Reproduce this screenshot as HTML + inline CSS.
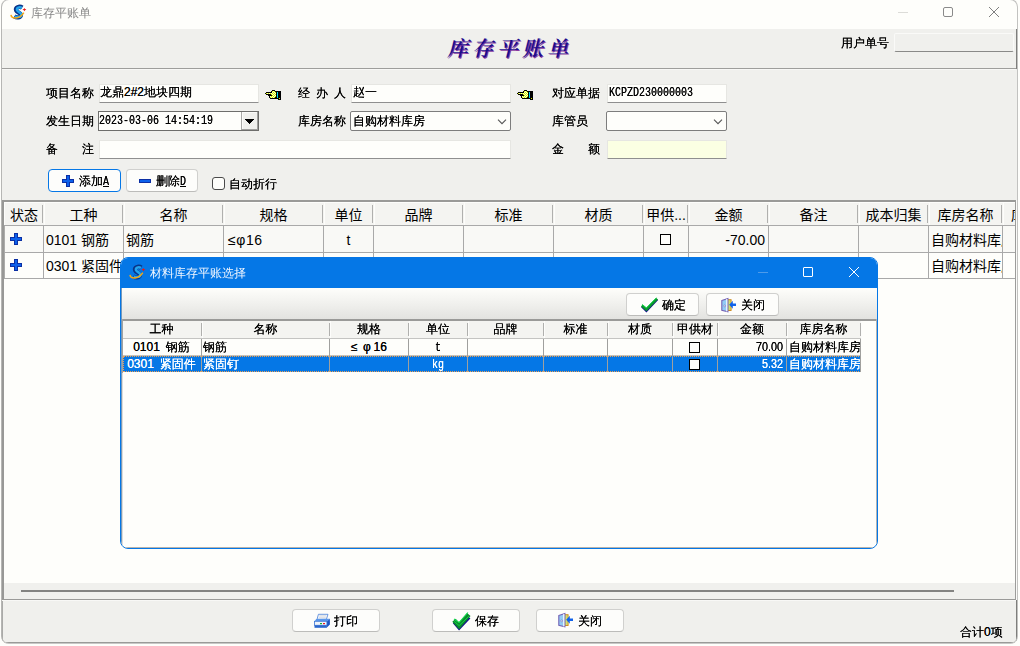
<!DOCTYPE html>
<html lang="zh-CN">
<head>
<meta charset="utf-8">
<title>库存平账单</title>
<style>
*{box-sizing:border-box;margin:0;padding:0}
html,body{width:1020px;height:646px;overflow:hidden;background:#fefefb}
body{position:relative;font-family:"Liberation Sans","WenQuanYi Zen Hei","Noto Sans CJK SC",sans-serif;font-size:12px;color:#000}
.a{position:absolute}
.clip{position:absolute;left:1px;top:-1px;width:1017px;height:645px;border-radius:8px;overflow:hidden}
.win{position:absolute;left:-1px;top:1px;width:1018px;height:644px;background:#f0f0ed}
.frame{position:absolute;left:1px;top:-1px;width:1017px;height:645px;border-radius:8px;border:1px solid #c2c2c0;border-left-color:#b6b6b4;border-bottom-color:#c8c8c6}
.tbar{position:absolute;left:0;top:0;width:1018px;height:29px;background:#fefefb}
.t{position:absolute;font-size:12px;line-height:14px;white-space:pre;color:#000;word-spacing:2.67px;text-shadow:0 0 0 currentColor}
.m{font-family:"Liberation Mono","WenQuanYi Zen Hei",monospace;font-size:12px;word-spacing:0;display:inline-block;transform:scaleX(.8333);transform-origin:0 50%}
.s{font-family:"Liberation Sans","WenQuanYi Zen Hei",sans-serif;font-size:12px;word-spacing:3.34px;display:inline-block;transform:scaleX(.9);transform-origin:0 50%}
.inp{position:absolute;height:19px;background:#fefefb;border:1px solid #e6e6e2;border-bottom:1px solid #8f8f8f;border-radius:1px}
.sel{position:absolute;height:20px;background:#fefefb;border:1px solid #7d7d7d;border-radius:2px}
.btn{position:absolute;height:23px;background:#fdfdfb;border:1px solid #d0d0ce;border-bottom-color:#bcbcba;border-radius:4px}
.g14{font-family:"Liberation Sans","Noto Sans CJK SC",sans-serif;font-size:14px;line-height:20px;position:absolute;white-space:pre;color:#000}
.vl{position:absolute;width:1px;background:#a9a9a9}
.hl{position:absolute;height:1px;background:#a9a9a9}
svg{position:absolute;overflow:visible}
</style>
</head>
<body>
<div class="clip">
<div class="win">
<div class="tbar">
<svg style="left:10px;top:4px" width="16" height="16" viewBox="0 0 16 16"><g transform="translate(8.600 8.400) scale(.88) translate(-8.500 -8)"><path d="M12.600 2.600C9.400 0.400 4.600 2.600 5.800 5.800C6.900 8.600 12 8.400 11 11.600C10.200 14 6.200 14.200 3.600 12.600" fill="none" stroke="#0a3488" stroke-width="5"/><path d="M12.200 2.800C9.400 1.200 5.800 2.800 6.800 5.600C7.900 8.200 12.600 8.400 11.600 11.400C10.700 13.600 6.800 13.800 4.200 12.400" fill="none" stroke="#22a4ee" stroke-width="2.900"/></g><path d="M1 10.800C1.600 15.200 9.600 15.400 13.800 8.600" fill="none" stroke="#f2a616" stroke-width="1.500"/><path d="M14.400 3.900l.65 1.150 1.350.55-1.350.55-.65 1.150-.65-1.150-1.350-.55 1.350-.55z" fill="#e81818"/></svg>
<div class="t" style="left:31px;top:6px;color:#868686;text-shadow:none">库存平账单</div>
<div class="a" style="left:898px;top:12px;width:10px;height:1px;background:#dcdcd8"></div>
<div class="a" style="left:943px;top:7px;width:10px;height:10px;border:1px solid #8a8a8a;border-radius:2px"></div>
<svg style="left:988px;top:6px" width="12" height="12" viewBox="0 0 12 12"><path d="M1 1L11 11M11 1L1 11" stroke="#808080" stroke-width="1" fill="none"/></svg>
</div>
<div class="a" style="left:1016px;top:29px;width:1px;height:40px;background:#7e7e7c"></div>
<div class="a" style="left:1016px;top:600px;width:1px;height:43px;background:#7e7e7c"></div>
<div class="a" style="left:2px;top:642px;width:1015px;height:1px;background:#9a9a98"></div>
<div class="a" id="bigtitle" style="left:447px;top:36px;font-family:'Liberation Serif','Noto Serif CJK SC',serif;font-weight:600;font-style:italic;font-size:21px;line-height:26px;letter-spacing:4px;color:#1c0c8c;text-shadow:1px 1px 0 #8a3aa0;white-space:pre">库存平账单</div>
<div class="t" style="left:841px;top:36px">用户单号</div>
<div class="a" style="left:894px;top:33px;width:120px;height:19px;background:#f0f0ed;border:1px solid #fafaf8;border-bottom:1px solid #8a8a88;border-radius:2px"></div>
<div class="hl" style="left:2px;top:68px;width:1014px;background:#9e9e9c"></div>
<div class="hl" style="left:2px;top:69px;width:1014px;background:#f8f8f6"></div>
<div class="t" style="left:46px;top:86px">项目名称</div>
<div class="inp" style="left:99px;top:84px;width:160px"></div>
<div class="t" style="left:100px;top:85px">龙鼎2#2地块四期</div>
<svg style="left:265px;top:90px" width="16" height="10" viewBox="0 0 16 10" shape-rendering="crispEdges"><rect x="7" y="0" width="3" height="1" fill="#000"/><rect x="6" y="1" width="1" height="1" fill="#000"/><rect x="7" y="1" width="1" height="1" fill="#d4f000"/><rect x="8" y="1" width="1" height="1" fill="#fbffd0"/><rect x="9" y="1" width="1" height="1" fill="#d4f000"/><rect x="10" y="1" width="6" height="1" fill="#000"/><rect x="1" y="2" width="6" height="1" fill="#000"/><rect x="7" y="2" width="1" height="1" fill="#fbffd0"/><rect x="8" y="2" width="1" height="1" fill="#d4f000"/><rect x="9" y="2" width="1" height="1" fill="#fbffd0"/><rect x="10" y="2" width="1" height="1" fill="#d4f000"/><rect x="11" y="2" width="1" height="1" fill="#000"/><rect x="12" y="2" width="1" height="1" fill="#00d8f0"/><rect x="13" y="2" width="3" height="1" fill="#000"/><rect x="0" y="3" width="1" height="1" fill="#000"/><rect x="1" y="3" width="1" height="1" fill="#d4f000"/><rect x="2" y="3" width="1" height="1" fill="#fbffd0"/><rect x="3" y="3" width="1" height="1" fill="#d4f000"/><rect x="4" y="3" width="1" height="1" fill="#fbffd0"/><rect x="5" y="3" width="1" height="1" fill="#d4f000"/><rect x="6" y="3" width="1" height="1" fill="#fbffd0"/><rect x="7" y="3" width="1" height="1" fill="#d4f000"/><rect x="8" y="3" width="1" height="1" fill="#fbffd0"/><rect x="9" y="3" width="1" height="1" fill="#d4f000"/><rect x="10" y="3" width="1" height="1" fill="#fbffd0"/><rect x="11" y="3" width="1" height="1" fill="#000"/><rect x="12" y="3" width="1" height="1" fill="#00d8f0"/><rect x="13" y="3" width="3" height="1" fill="#000"/><rect x="1" y="4" width="5" height="1" fill="#000"/><rect x="6" y="4" width="1" height="1" fill="#d4f000"/><rect x="7" y="4" width="1" height="1" fill="#fbffd0"/><rect x="8" y="4" width="1" height="1" fill="#d4f000"/><rect x="9" y="4" width="1" height="1" fill="#fbffd0"/><rect x="10" y="4" width="1" height="1" fill="#d4f000"/><rect x="11" y="4" width="1" height="1" fill="#000"/><rect x="12" y="4" width="1" height="1" fill="#00d8f0"/><rect x="13" y="4" width="3" height="1" fill="#000"/><rect x="3" y="5" width="4" height="1" fill="#000"/><rect x="7" y="5" width="1" height="1" fill="#d4f000"/><rect x="8" y="5" width="1" height="1" fill="#fbffd0"/><rect x="9" y="5" width="1" height="1" fill="#d4f000"/><rect x="10" y="5" width="1" height="1" fill="#fbffd0"/><rect x="11" y="5" width="1" height="1" fill="#000"/><rect x="12" y="5" width="1" height="1" fill="#00d8f0"/><rect x="13" y="5" width="3" height="1" fill="#000"/><rect x="4" y="6" width="1" height="1" fill="#000"/><rect x="5" y="6" width="1" height="1" fill="#fbffd0"/><rect x="6" y="6" width="1" height="1" fill="#d4f000"/><rect x="7" y="6" width="1" height="1" fill="#fbffd0"/><rect x="8" y="6" width="1" height="1" fill="#d4f000"/><rect x="9" y="6" width="1" height="1" fill="#fbffd0"/><rect x="10" y="6" width="1" height="1" fill="#d4f000"/><rect x="11" y="6" width="1" height="1" fill="#000"/><rect x="12" y="6" width="1" height="1" fill="#00d8f0"/><rect x="13" y="6" width="3" height="1" fill="#000"/><rect x="4" y="7" width="1" height="1" fill="#000"/><rect x="5" y="7" width="1" height="1" fill="#d4f000"/><rect x="6" y="7" width="1" height="1" fill="#fbffd0"/><rect x="7" y="7" width="1" height="1" fill="#d4f000"/><rect x="8" y="7" width="1" height="1" fill="#fbffd0"/><rect x="9" y="7" width="1" height="1" fill="#d4f000"/><rect x="10" y="7" width="2" height="1" fill="#000"/><rect x="12" y="7" width="1" height="1" fill="#00d8f0"/><rect x="13" y="7" width="3" height="1" fill="#000"/><rect x="5" y="8" width="9" height="1" fill="#000"/><rect x="14" y="8" width="1" height="1" fill="#d4f000"/><rect x="15" y="8" width="1" height="1" fill="#000"/><rect x="13" y="9" width="3" height="1" fill="#000"/></svg>
<div class="t" style="left:298px;top:86px">经 办 人</div>
<div class="inp" style="left:351px;top:84px;width:160px"></div>
<div class="t" style="left:353px;top:85px">赵一</div>
<svg style="left:517px;top:90px" width="16" height="10" viewBox="0 0 16 10" shape-rendering="crispEdges"><rect x="7" y="0" width="3" height="1" fill="#000"/><rect x="6" y="1" width="1" height="1" fill="#000"/><rect x="7" y="1" width="1" height="1" fill="#d4f000"/><rect x="8" y="1" width="1" height="1" fill="#fbffd0"/><rect x="9" y="1" width="1" height="1" fill="#d4f000"/><rect x="10" y="1" width="6" height="1" fill="#000"/><rect x="1" y="2" width="6" height="1" fill="#000"/><rect x="7" y="2" width="1" height="1" fill="#fbffd0"/><rect x="8" y="2" width="1" height="1" fill="#d4f000"/><rect x="9" y="2" width="1" height="1" fill="#fbffd0"/><rect x="10" y="2" width="1" height="1" fill="#d4f000"/><rect x="11" y="2" width="1" height="1" fill="#000"/><rect x="12" y="2" width="1" height="1" fill="#00d8f0"/><rect x="13" y="2" width="3" height="1" fill="#000"/><rect x="0" y="3" width="1" height="1" fill="#000"/><rect x="1" y="3" width="1" height="1" fill="#d4f000"/><rect x="2" y="3" width="1" height="1" fill="#fbffd0"/><rect x="3" y="3" width="1" height="1" fill="#d4f000"/><rect x="4" y="3" width="1" height="1" fill="#fbffd0"/><rect x="5" y="3" width="1" height="1" fill="#d4f000"/><rect x="6" y="3" width="1" height="1" fill="#fbffd0"/><rect x="7" y="3" width="1" height="1" fill="#d4f000"/><rect x="8" y="3" width="1" height="1" fill="#fbffd0"/><rect x="9" y="3" width="1" height="1" fill="#d4f000"/><rect x="10" y="3" width="1" height="1" fill="#fbffd0"/><rect x="11" y="3" width="1" height="1" fill="#000"/><rect x="12" y="3" width="1" height="1" fill="#00d8f0"/><rect x="13" y="3" width="3" height="1" fill="#000"/><rect x="1" y="4" width="5" height="1" fill="#000"/><rect x="6" y="4" width="1" height="1" fill="#d4f000"/><rect x="7" y="4" width="1" height="1" fill="#fbffd0"/><rect x="8" y="4" width="1" height="1" fill="#d4f000"/><rect x="9" y="4" width="1" height="1" fill="#fbffd0"/><rect x="10" y="4" width="1" height="1" fill="#d4f000"/><rect x="11" y="4" width="1" height="1" fill="#000"/><rect x="12" y="4" width="1" height="1" fill="#00d8f0"/><rect x="13" y="4" width="3" height="1" fill="#000"/><rect x="3" y="5" width="4" height="1" fill="#000"/><rect x="7" y="5" width="1" height="1" fill="#d4f000"/><rect x="8" y="5" width="1" height="1" fill="#fbffd0"/><rect x="9" y="5" width="1" height="1" fill="#d4f000"/><rect x="10" y="5" width="1" height="1" fill="#fbffd0"/><rect x="11" y="5" width="1" height="1" fill="#000"/><rect x="12" y="5" width="1" height="1" fill="#00d8f0"/><rect x="13" y="5" width="3" height="1" fill="#000"/><rect x="4" y="6" width="1" height="1" fill="#000"/><rect x="5" y="6" width="1" height="1" fill="#fbffd0"/><rect x="6" y="6" width="1" height="1" fill="#d4f000"/><rect x="7" y="6" width="1" height="1" fill="#fbffd0"/><rect x="8" y="6" width="1" height="1" fill="#d4f000"/><rect x="9" y="6" width="1" height="1" fill="#fbffd0"/><rect x="10" y="6" width="1" height="1" fill="#d4f000"/><rect x="11" y="6" width="1" height="1" fill="#000"/><rect x="12" y="6" width="1" height="1" fill="#00d8f0"/><rect x="13" y="6" width="3" height="1" fill="#000"/><rect x="4" y="7" width="1" height="1" fill="#000"/><rect x="5" y="7" width="1" height="1" fill="#d4f000"/><rect x="6" y="7" width="1" height="1" fill="#fbffd0"/><rect x="7" y="7" width="1" height="1" fill="#d4f000"/><rect x="8" y="7" width="1" height="1" fill="#fbffd0"/><rect x="9" y="7" width="1" height="1" fill="#d4f000"/><rect x="10" y="7" width="2" height="1" fill="#000"/><rect x="12" y="7" width="1" height="1" fill="#00d8f0"/><rect x="13" y="7" width="3" height="1" fill="#000"/><rect x="5" y="8" width="9" height="1" fill="#000"/><rect x="14" y="8" width="1" height="1" fill="#d4f000"/><rect x="15" y="8" width="1" height="1" fill="#000"/><rect x="13" y="9" width="3" height="1" fill="#000"/></svg>
<div class="t" style="left:552px;top:86px">对应单据</div>
<div class="inp" style="left:607px;top:84px;width:120px"></div>
<div class="t" style="left:609px;top:85px"><span class="m" style="margin-right:-16.8px;">KCPZD230000003</span></div>
<div class="t" style="left:46px;top:114px">发生日期</div>
<div class="a" style="left:98px;top:111px;width:161px;height:20px;background:#fefefb;border:1px solid #6e6e6c"></div>
<div class="t" style="left:99px;top:113px"><span class="m" style="margin-right:-22.8px;">2023-03-06 14:54:19</span></div>
<div class="a" style="left:241px;top:112px;width:17px;height:18px;background:#f0f0ed;border-left:1px solid #a8a8a6;border-right:1px solid #a0a09e;border-bottom:1px solid #a0a09e;box-shadow:inset 1px 1px 0 #fbfbf9"></div>
<svg style="left:245px;top:119px" width="9" height="5" viewBox="0 0 9 5" shape-rendering="crispEdges"><path d="M0 0h9v1h-1v1h-1v1h-1v1h-1v1h-1v-1h-1v-1h-1v-1h-1v-1h-1z" fill="#000"/></svg>
<div class="t" style="left:298px;top:114px">库房名称</div>
<div class="sel" style="left:350px;top:111px;width:161px"></div>
<div class="t" style="left:353px;top:114px">自购材料库房</div>
<svg style="left:497px;top:118px" width="11" height="7" viewBox="0 0 11 7"><path d="M1 1.600L5 5.600L9 1.600" stroke="#555" stroke-width="1.100" fill="none"/></svg>
<div class="t" style="left:552px;top:114px">库管员</div>
<div class="sel" style="left:606px;top:111px;width:121px"></div>
<svg style="left:713px;top:118px" width="11" height="7" viewBox="0 0 11 7"><path d="M1 1.600L5 5.600L9 1.600" stroke="#555" stroke-width="1.100" fill="none"/></svg>
<div class="t" style="left:46px;top:142px">备    注</div>
<div class="inp" style="left:99px;top:140px;width:412px"></div>
<div class="t" style="left:552px;top:142px">金    额</div>
<div class="inp" style="left:607px;top:140px;width:120px;background:#fbffe3"></div>
<div class="btn" style="left:48px;top:169px;width:73px;border:1.5px solid #0577e6"></div>
<svg style="left:62px;top:175px" width="12" height="12" viewBox="0 0 12 12" shape-rendering="crispEdges"><path d="M4 0h4v4h4v4h-4v4h-4v-4h-4v-4h4z" fill="#0b2fa4"/><path d="M5 1h2v4h4v2h-4v4h-2v-4h-4v-2h4z" fill="#0c60ea"/></svg>
<div class="t" style="left:79px;top:174px">添加<span class="m" style="margin-right:-1.2px;text-decoration:underline">A</span></div>
<div class="btn" style="left:126px;top:169px;width:72px"></div>
<svg style="left:139px;top:179px" width="12" height="4" viewBox="0 0 12 4" shape-rendering="crispEdges"><rect width="12" height="4" fill="#0b2fa4"/><rect x="1" y="1" width="10" height="2" fill="#0c60ea"/></svg>
<div class="t" style="left:156px;top:174px">删除<span class="m" style="margin-right:-1.2px;text-decoration:underline">D</span></div>
<div class="a" style="left:212px;top:177px;width:13px;height:13px;background:#fefefb;border:1px solid #4a4a4a;border-radius:3px"></div>
<div class="t" style="left:229px;top:177px">自动折行</div>
<div class="a" id="grid" style="left:3px;top:200px;width:1012px;height:383px;background:#fefefb"></div>
<div class="a" style="left:2px;top:200px;width:1014px;height:2px;background:#9a9a98"></div>
<div class="a" style="left:1015px;top:200px;width:1px;height:399px;background:#9c9c9a"></div>
<div class="a" style="left:1016px;top:200px;width:1px;height:400px;background:#fafaf8"></div>
<div class="a" style="left:2px;top:200px;width:2px;height:399px;background:#989896"></div>
<div class="vl" style="left:4px;top:226px;height:53px;background:#adadab"></div>
<div class="a" style="left:2px;top:600px;width:1px;height:42px;background:#aaaaa8"></div>
<div class="a" style="left:4px;top:202px;width:1011px;height:23px;background:#f4f4f1;border-top:1px solid #fdfdfb;border-left:1px solid #fdfdfb"></div>
<div class="a" style="left:5px;top:226px;width:1010px;height:26px;background:#f9f9f6"></div>
<div class="hl" style="left:4px;top:225px;width:1011px"></div>
<div class="hl" style="left:4px;top:252px;width:1011px"></div>
<div class="hl" style="left:4px;top:278px;width:1011px"></div>
<div class="vl" style="left:44px;top:202px;height:23px;background:#fdfdfb"></div>
<div class="vl" style="left:42px;top:205px;height:18px;background:#b0b0ae"></div>
<div class="vl" style="left:43px;top:226px;height:53px"></div>
<div class="vl" style="left:124px;top:202px;height:23px;background:#fdfdfb"></div>
<div class="vl" style="left:122px;top:205px;height:18px;background:#b0b0ae"></div>
<div class="vl" style="left:123px;top:226px;height:53px"></div>
<div class="vl" style="left:224px;top:202px;height:23px;background:#fdfdfb"></div>
<div class="vl" style="left:222px;top:205px;height:18px;background:#b0b0ae"></div>
<div class="vl" style="left:223px;top:226px;height:53px"></div>
<div class="vl" style="left:324px;top:202px;height:23px;background:#fdfdfb"></div>
<div class="vl" style="left:322px;top:205px;height:18px;background:#b0b0ae"></div>
<div class="vl" style="left:323px;top:226px;height:53px"></div>
<div class="vl" style="left:374px;top:202px;height:23px;background:#fdfdfb"></div>
<div class="vl" style="left:372px;top:205px;height:18px;background:#b0b0ae"></div>
<div class="vl" style="left:373px;top:226px;height:53px"></div>
<div class="vl" style="left:464px;top:202px;height:23px;background:#fdfdfb"></div>
<div class="vl" style="left:462px;top:205px;height:18px;background:#b0b0ae"></div>
<div class="vl" style="left:463px;top:226px;height:53px"></div>
<div class="vl" style="left:554px;top:202px;height:23px;background:#fdfdfb"></div>
<div class="vl" style="left:552px;top:205px;height:18px;background:#b0b0ae"></div>
<div class="vl" style="left:553px;top:226px;height:53px"></div>
<div class="vl" style="left:644px;top:202px;height:23px;background:#fdfdfb"></div>
<div class="vl" style="left:642px;top:205px;height:18px;background:#b0b0ae"></div>
<div class="vl" style="left:643px;top:226px;height:53px"></div>
<div class="vl" style="left:689px;top:202px;height:23px;background:#fdfdfb"></div>
<div class="vl" style="left:687px;top:205px;height:18px;background:#b0b0ae"></div>
<div class="vl" style="left:688px;top:226px;height:53px"></div>
<div class="vl" style="left:769px;top:202px;height:23px;background:#fdfdfb"></div>
<div class="vl" style="left:767px;top:205px;height:18px;background:#b0b0ae"></div>
<div class="vl" style="left:768px;top:226px;height:53px"></div>
<div class="vl" style="left:859px;top:202px;height:23px;background:#fdfdfb"></div>
<div class="vl" style="left:857px;top:205px;height:18px;background:#b0b0ae"></div>
<div class="vl" style="left:858px;top:226px;height:53px"></div>
<div class="vl" style="left:929px;top:202px;height:23px;background:#fdfdfb"></div>
<div class="vl" style="left:927px;top:205px;height:18px;background:#b0b0ae"></div>
<div class="vl" style="left:928px;top:226px;height:53px"></div>
<div class="vl" style="left:1003px;top:202px;height:23px;background:#fdfdfb"></div>
<div class="vl" style="left:1001px;top:205px;height:18px;background:#b0b0ae"></div>
<div class="vl" style="left:1002px;top:226px;height:53px"></div>
<div class="g14" style="left:5px;top:205px;width:38px;text-align:center">状态</div>
<div class="g14" style="left:44px;top:205px;width:79px;text-align:center">工种</div>
<div class="g14" style="left:124px;top:205px;width:99px;text-align:center">名称</div>
<div class="g14" style="left:224px;top:205px;width:99px;text-align:center">规格</div>
<div class="g14" style="left:324px;top:205px;width:49px;text-align:center">单位</div>
<div class="g14" style="left:374px;top:205px;width:89px;text-align:center">品牌</div>
<div class="g14" style="left:464px;top:205px;width:89px;text-align:center">标准</div>
<div class="g14" style="left:554px;top:205px;width:89px;text-align:center">材质</div>
<div class="g14" style="left:644px;top:205px;width:44px;text-align:center">甲供...</div>
<div class="g14" style="left:689px;top:205px;width:79px;text-align:center">金额</div>
<div class="g14" style="left:769px;top:205px;width:89px;text-align:center">备注</div>
<div class="g14" style="left:859px;top:205px;width:69px;text-align:center">成本归集</div>
<div class="g14" style="left:929px;top:205px;width:73px;text-align:center">库房名称</div>
<div class="g14" style="left:1011px;top:205px;width:4px;overflow:hidden">库</div>
<svg style="left:10px;top:233px" width="12" height="12" viewBox="0 0 12 12" shape-rendering="crispEdges"><path d="M4 0h4v4h4v4h-4v4h-4v-4h-4v-4h4z" fill="#0b2fa4"/><path d="M5 1h2v4h4v2h-4v4h-2v-4h-4v-2h4z" fill="#0c60ea"/></svg>
<svg style="left:10px;top:259px" width="12" height="12" viewBox="0 0 12 12" shape-rendering="crispEdges"><path d="M4 0h4v4h4v4h-4v4h-4v-4h-4v-4h4z" fill="#0b2fa4"/><path d="M5 1h2v4h4v2h-4v4h-2v-4h-4v-2h4z" fill="#0c60ea"/></svg>
<div class="g14" style="left:44px;top:230px;width:79px;overflow:hidden;text-align:left;padding-left:2px;">0101 钢筋</div>
<div class="g14" style="left:124px;top:230px;width:99px;overflow:hidden;text-align:left;padding-left:2px;">钢筋</div>
<div class="g14" style="left:224px;top:230px;width:99px;overflow:hidden;text-align:left;padding-left:4px;"><span style="letter-spacing:.6px">≤φ16</span></div>
<div class="g14" style="left:324px;top:230px;width:49px;overflow:hidden;text-align:center;">t</div>
<div class="a" style="left:660px;top:234px;width:11px;height:11px;border:1px solid #000;background:#fefefb"></div>
<div class="g14" style="left:689px;top:230px;width:79px;overflow:hidden;text-align:right;padding-right:3px;">-70.00</div>
<div class="g14" style="left:929px;top:230px;width:73px;overflow:hidden;text-align:left;padding-left:2px;">自购材料库房</div>
<div class="g14" style="left:44px;top:256px;width:79px;overflow:hidden;text-align:left;padding-left:2px;">0301 紧固件</div>
<div class="g14" style="left:929px;top:256px;width:73px;overflow:hidden;text-align:left;padding-left:2px;">自购材料库房</div>
<div class="a" style="left:4px;top:583px;width:1011px;height:16px;background:#f0f0ed"></div>
<div class="a" style="left:21px;top:590px;width:933px;height:2px;background:#838381"></div>
<div class="hl" style="left:2px;top:599px;width:1014px;background:#9a9a98"></div>
<div class="hl" style="left:2px;top:600px;width:1014px;background:#f8f8f6"></div>
<div class="btn" style="left:292px;top:609px;width:88px"></div>
<svg style="left:314px;top:613.5px" width="17" height="15" viewBox="0 0 17 15"><path d="M4.4 0.3h9.600l-1.600 5h-9.400z" fill="#f4f6fa" stroke="#4a82d8" stroke-width="0.8"/><path d="M5.400 1.800h6.800M4.900 3.300h6.800" stroke="#c8ccd4" stroke-width="0.6"/><path d="M2.200 5l-1.700 2.400h12.400l3-2.600z" fill="#5a98ec"/><path d="M12.800 7.400l3.100-2.700v5.700l-3.100 3.200z" fill="#1d56c0"/><rect x="0.500" y="7.300" width="12.400" height="4" fill="#eef3fb" stroke="#3a74d4" stroke-width="0.8"/><rect x="0.500" y="11.300" width="12.400" height="2.500" fill="#2a66cc"/><rect x="6" y="9" width="2" height="1.200" fill="#18b030"/><rect x="9" y="9" width="2" height="1.200" fill="#e82020"/></svg>
<div class="t" style="left:334px;top:614px">打印</div>
<div class="btn" style="left:432px;top:609px;width:88px"></div>
<svg style="left:452.5px;top:611px" width="18" height="19" viewBox="0 0 18 19"><path d="M1 11.200L6.100 17.300L16.300 6.400" fill="none" stroke="#14108c" stroke-width="3"/><path d="M1 9.200L6.100 14.800L15.800 3.600" fill="none" stroke="#0a8a2c" stroke-width="4.600"/><path d="M1.200 10.300L6.100 14.600L16 5.200" fill="none" stroke="#12d84c" stroke-width="0.900"/><path d="M1 8L6.100 11.600L14.900 1.500" fill="none" stroke="#12e050" stroke-width="1.100"/></svg>
<div class="t" style="left:475px;top:614px">保存</div>
<div class="btn" style="left:536px;top:609px;width:88px"></div>
<svg style="left:557.5px;top:612.5px" width="16" height="15" viewBox="0 0 16 15"><rect x="6.700" y="1.700" width="3.400" height="10.800" fill="#cfe070" stroke="#cc8418" stroke-width="0.900"/><path d="M0.800 2.600L6.900 0.500V13.800L0.800 12.300Z" fill="#92ccf6" stroke="#7462b4" stroke-width="1.100"/><path d="M5.800 1V13.500" stroke="#fff" stroke-width="1.100"/><circle cx="3.700" cy="7.900" r="0.900" fill="#fff" stroke="#7868b8" stroke-width="0.600"/><path d="M8.200 6.800L11.800 2.700V5.400H15V8.100H11.800V10.700Z" fill="#1062ea"/></svg>
<div class="t" style="left:578px;top:614px">关闭</div>
<div class="t" style="left:960px;top:625px">合计0项</div>
<div class="a" id="dlg" style="left:120px;top:257px;width:758px;height:292px;background:#fefefb;border:1px solid #0577e6;border-radius:8px;overflow:hidden">
<div class="a" style="left:0;top:0;width:756px;height:30px;background:#0577e6"></div>
<svg style="left:8px;top:6px" width="16" height="16" viewBox="0 0 16 16"><g transform="translate(8.600 8.400) scale(.88) translate(-8.500 -8)"><path d="M12.600 2.600C9.400 0.400 4.600 2.600 5.800 5.800C6.900 8.600 12 8.400 11 11.600C10.200 14 6.200 14.200 3.600 12.600" fill="none" stroke="#0a3488" stroke-width="5"/><path d="M12.200 2.800C9.400 1.200 5.800 2.800 6.800 5.600C7.900 8.200 12.600 8.400 11.600 11.400C10.700 13.600 6.800 13.800 4.200 12.400" fill="none" stroke="#22a4ee" stroke-width="2.900"/></g><path d="M1 10.800C1.600 15.200 9.600 15.400 13.800 8.600" fill="none" stroke="#f2a616" stroke-width="1.500"/><path d="M14.400 3.900l.65 1.150 1.350.55-1.350.55-.65 1.150-.65-1.150-1.350-.55 1.350-.55z" fill="#e81818"/></svg>
<div class="t" style="left:29px;top:8px;color:#f2f7ff;text-shadow:none">材料库存平账选择</div>
<div class="a" style="left:637px;top:14px;width:10px;height:1px;background:#4d9bea"></div>
<div class="a" style="left:682px;top:9px;width:10px;height:10px;border:1px solid #fff;border-radius:1px"></div>
<svg style="left:727px;top:8px" width="12" height="12" viewBox="0 0 12 12"><path d="M1 1L11 11M11 1L1 11" stroke="#fff" stroke-width="1" fill="none"/></svg>
<div class="a" style="left:0;top:30px;width:756px;height:31px;background:linear-gradient(#fefefb,#e3e3e0)"></div>
<div class="a" style="left:0;top:61px;width:756px;height:2px;background:#9a9a98"></div>
<div class="btn" style="left:505px;top:35px;width:73px"></div>
<svg style="left:519.5px;top:39px" width="17" height="15" viewBox="0 0 17 15"><path d="M0.800 9.600L5.400 14L16.400 2.400" fill="none" stroke="#14108c" stroke-width="2"/><path d="M0.800 8.400L5.400 12.400L16 1.600" fill="none" stroke="#0a982c" stroke-width="2.600"/><path d="M1 7.400L5.400 10.900L15.400 0.700" fill="none" stroke="#14e050" stroke-width="0.900"/></svg>
<div class="t" style="left:541px;top:40px">确定</div>
<div class="btn" style="left:585px;top:35px;width:73px"></div>
<svg style="left:599.5px;top:39.5px" width="16" height="15" viewBox="0 0 16 15"><rect x="6.700" y="1.700" width="3.400" height="10.800" fill="#cfe070" stroke="#cc8418" stroke-width="0.900"/><path d="M0.800 2.600L6.900 0.500V13.800L0.800 12.300Z" fill="#92ccf6" stroke="#7462b4" stroke-width="1.100"/><path d="M5.800 1V13.500" stroke="#fff" stroke-width="1.100"/><circle cx="3.700" cy="7.900" r="0.900" fill="#fff" stroke="#7868b8" stroke-width="0.600"/><path d="M8.200 6.800L11.800 2.700V5.400H15V8.100H11.800V10.700Z" fill="#1062ea"/></svg>
<div class="t" style="left:620px;top:40px">关闭</div>
<div class="a" style="left:0;top:30px;width:1px;height:260px;background:#7799b9"></div>
<div class="a" style="left:1px;top:61px;width:1px;height:54px;background:#a2a2a0"></div>
<div class="a" style="left:1px;top:115px;width:1px;height:174px;background:#dddbd7"></div>
<div class="a" style="left:2px;top:289px;width:752px;height:1px;background:#b9b4ac"></div>
<div class="a" style="left:755px;top:61px;width:1px;height:229px;background:#b4b4b2"></div>
<div class="a" style="left:2px;top:63px;width:738px;height:17px;background:#f4f4f1"></div>
<div class="hl" style="left:2px;top:80px;width:738px;background:#c4c4c2"></div>
<div class="hl" style="left:2px;top:97px;width:738px;background:#c8c2b6"></div>
<div class="a" style="left:2px;top:98px;width:738px;height:16px;background:#0577e6;outline:1px dotted #f0a050;outline-offset:-1px"></div>
<div class="vl" style="left:81px;top:63px;height:17px;background:#fdfdfb"></div>
<div class="vl" style="left:80px;top:65px;height:13px;background:#b0b0ae"></div>
<div class="vl" style="left:80px;top:81px;height:33px;background:#a0a09e"></div>
<div class="vl" style="left:209px;top:63px;height:17px;background:#fdfdfb"></div>
<div class="vl" style="left:208px;top:65px;height:13px;background:#b0b0ae"></div>
<div class="vl" style="left:208px;top:81px;height:33px;background:#a0a09e"></div>
<div class="vl" style="left:288px;top:63px;height:17px;background:#fdfdfb"></div>
<div class="vl" style="left:287px;top:65px;height:13px;background:#b0b0ae"></div>
<div class="vl" style="left:287px;top:81px;height:33px;background:#a0a09e"></div>
<div class="vl" style="left:347px;top:63px;height:17px;background:#fdfdfb"></div>
<div class="vl" style="left:346px;top:65px;height:13px;background:#b0b0ae"></div>
<div class="vl" style="left:346px;top:81px;height:33px;background:#a0a09e"></div>
<div class="vl" style="left:423px;top:63px;height:17px;background:#fdfdfb"></div>
<div class="vl" style="left:422px;top:65px;height:13px;background:#b0b0ae"></div>
<div class="vl" style="left:422px;top:81px;height:33px;background:#a0a09e"></div>
<div class="vl" style="left:487px;top:63px;height:17px;background:#fdfdfb"></div>
<div class="vl" style="left:486px;top:65px;height:13px;background:#b0b0ae"></div>
<div class="vl" style="left:486px;top:81px;height:33px;background:#a0a09e"></div>
<div class="vl" style="left:552px;top:63px;height:17px;background:#fdfdfb"></div>
<div class="vl" style="left:551px;top:65px;height:13px;background:#b0b0ae"></div>
<div class="vl" style="left:551px;top:81px;height:33px;background:#a0a09e"></div>
<div class="vl" style="left:597px;top:63px;height:17px;background:#fdfdfb"></div>
<div class="vl" style="left:596px;top:65px;height:13px;background:#b0b0ae"></div>
<div class="vl" style="left:596px;top:81px;height:33px;background:#a0a09e"></div>
<div class="vl" style="left:666px;top:63px;height:17px;background:#fdfdfb"></div>
<div class="vl" style="left:665px;top:65px;height:13px;background:#b0b0ae"></div>
<div class="vl" style="left:665px;top:81px;height:33px;background:#a0a09e"></div>
<div class="vl" style="left:740px;top:63px;height:17px;background:#fdfdfb"></div>
<div class="vl" style="left:739px;top:65px;height:13px;background:#b0b0ae"></div>
<div class="vl" style="left:739px;top:81px;height:33px;background:#a0a09e"></div>
<div class="t" style="left:1px;top:64px;width:79px;text-align:center">工种</div>
<div class="t" style="left:81px;top:64px;width:127px;text-align:center">名称</div>
<div class="t" style="left:209px;top:64px;width:78px;text-align:center">规格</div>
<div class="t" style="left:288px;top:64px;width:58px;text-align:center">单位</div>
<div class="t" style="left:347px;top:64px;width:75px;text-align:center">品牌</div>
<div class="t" style="left:423px;top:64px;width:63px;text-align:center">标准</div>
<div class="t" style="left:487px;top:64px;width:64px;text-align:center">材质</div>
<div class="t" style="left:552px;top:64px;width:44px;text-align:center">甲供材</div>
<div class="t" style="left:597px;top:64px;width:68px;text-align:center">金额</div>
<div class="t" style="left:666px;top:64px;width:73px;text-align:center">库房名称</div>
<div class="t" style="left:1px;top:82px;width:79px;overflow:hidden;text-align:center;color:#000;">0101 钢筋</div>
<div class="t" style="left:81px;top:82px;width:127px;overflow:hidden;text-align:left;color:#000;padding-left:1px;">钢筋</div>
<div class="t" style="left:209px;top:82px;width:78px;overflow:hidden;text-align:center;color:#000;"><span style="letter-spacing:5.4px;margin-right:-2.700px">≤φ</span>16</div>
<div class="t" style="left:288px;top:82px;width:58px;overflow:hidden;text-align:center;color:#000;"><span class="m" style="margin-right:-1.2px;">t</span></div>
<div class="a" style="left:568px;top:84px;width:11px;height:11px;border:1px solid #000;background:#fefefb"></div>
<div class="t" style="left:597px;top:82px;width:68px;overflow:hidden;text-align:right;color:#000;padding-right:3px;"><span class="s" style="margin-right:-3.00px;">70.00</span></div>
<div class="t" style="left:666px;top:82px;width:73px;overflow:hidden;text-align:left;color:#000;padding-left:2px;">自购材料库房</div>
<div class="t" style="left:1px;top:99px;width:79px;overflow:hidden;text-align:center;color:#fff;">0301 紧固件</div>
<div class="t" style="left:81px;top:99px;width:127px;overflow:hidden;text-align:left;color:#fff;padding-left:1px;">紧固钉</div>
<div class="t" style="left:288px;top:99px;width:58px;overflow:hidden;text-align:center;color:#fff;"><span class="m" style="margin-right:-2.4px;">kg</span></div>
<div class="a" style="left:568px;top:101px;width:11px;height:11px;border:1px solid #000;background:#fefefb"></div>
<div class="t" style="left:597px;top:99px;width:68px;overflow:hidden;text-align:right;color:#fff;padding-right:3px;"><span class="s" style="margin-right:-2.34px;">5.32</span></div>
<div class="t" style="left:666px;top:99px;width:73px;overflow:hidden;text-align:left;color:#fff;padding-left:2px;">自购材料库房</div>
</div>
</div>
</div>
<div class="frame"></div>
</body>
</html>
